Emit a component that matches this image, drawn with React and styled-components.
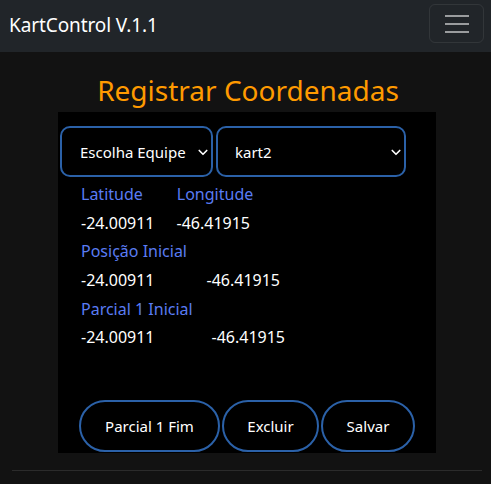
import React from "react";
import styled, { createGlobalStyle } from "styled-components";

const Global = createGlobalStyle`
  html, body { margin: 0; padding: 0; background: #121212; }
  body { font-family: "Noto Sans", "Open Sans", sans-serif; color: #fff; }
  * { box-sizing: border-box; }
`;

const Nav = styled.nav`
  height: 52px;
  background: #212529;
  display: flex;
  align-items: center;
  justify-content: space-between;
  padding: 0 7px 0 9px;
`;

const Brand = styled.div`
  font-size: 19px;
  color: #fff;
  letter-spacing: -0.1px;
  margin-top: -3px;
`;

const Toggler = styled.button`
  width: 55px;
  height: 39px;
  margin-top: -5px;
  background: transparent;
  border: 1px solid rgba(255, 255, 255, 0.08);
  border-radius: 6px;
  display: flex;
  flex-direction: column;
  align-items: center;
  justify-content: center;
  gap: 6px;
  padding: 0;
`;

const Bar = styled.span`
  display: block;
  width: 24px;
  height: 2px;
  background: #9a9c9e;
`;

const Main = styled.main`
  display: flex;
  flex-direction: column;
  align-items: flex-start;
  padding-left: 58px;
`;

const Title = styled.h1`
  width: 378px;
  margin: 0;
  height: 60px;
  display: flex;
  align-items: flex-end;
  justify-content: center;
  font-weight: 400;
  font-size: 28px;
  line-height: 34px;
  color: #ff9a00;
  padding: 0 0 5px 2px;
`;

const Panel = styled.section`
  width: 378px;
  height: 341px;
  background: #000;
  display: flex;
  flex-direction: column;
  padding: 14px 0 1px 2px;
`;

const SelectRow = styled.div`
  display: flex;
  gap: 3px;
`;

const Select = styled.div`
  width: ${(p) => p.$w}px;
  height: 51px;
  border: 2px solid #2b61a8;
  border-radius: 10px;
  display: flex;
  align-items: center;
  justify-content: space-between;
  padding: 0 2px 0 ${(p) => p.$pl}px;
  font-size: 15px;
  color: #fff;
`;

const Info = styled.div`
  display: flex;
  flex-direction: column;
  padding-left: 21px;
  margin-top: 3px;
`;

const Line = styled.div`
  display: flex;
  height: 28.6px;
  align-items: center;
  font-size: 16px;
  color: ${(p) => (p.$label ? "#5a7cf3" : "#fff")};
`;

const Second = styled.span`
  margin-left: ${(p) => p.$ml}px;
`;

const Buttons = styled.div`
  margin-top: auto;
  display: flex;
  gap: 2px;
  padding-left: 19px;
`;

const Pill = styled.button`
  width: ${(p) => p.$w}px;
  height: 52px;
  border: 2px solid #2b61a8;
  border-radius: 26px;
  background: #000;
  color: #fff;
  font-family: inherit;
  font-size: 15px;
  padding: 0;
`;

const Footer = styled.hr`
  margin: 17px 9px 0 12px;
  border: 0;
  border-top: 1px solid #2b2b2b;
`;

const Chevron = () => (
  <svg width="12" height="12" viewBox="0 0 16 16">
    <path d="M3 6l5 5 5-5" fill="none" stroke="#fff" strokeWidth="2.2" strokeLinecap="round" strokeLinejoin="round" />
  </svg>
);

export default function App() {
  return (
    <>
      <Global />
      <Nav>
        <Brand>KartControl V.1.1</Brand>
        <Toggler aria-label="menu">
          <Bar />
          <Bar />
          <Bar />
        </Toggler>
      </Nav>
      <Main>
        <Title>Registrar Coordenadas</Title>
        <Panel>
          <SelectRow>
            <Select $w={153} $pl={18}>
              Escolha Equipe <Chevron />
            </Select>
            <Select $w={190} $pl={17}>
              kart2 <Chevron />
            </Select>
          </SelectRow>
          <Info>
            <Line $label>
              Latitude<Second $ml={34}>Longitude</Second>
            </Line>
            <Line>
              -24.00911<Second $ml={22}>-46.41915</Second>
            </Line>
            <Line $label>Posição Inicial</Line>
            <Line>
              -24.00911<Second $ml={52}>-46.41915</Second>
            </Line>
            <Line $label>Parcial 1 Inicial</Line>
            <Line>
              -24.00911<Second $ml={57}>-46.41915</Second>
            </Line>
          </Info>
          <Buttons>
            <Pill $w={141}>Parcial 1 Fim</Pill>
            <Pill $w={97}>Excluir</Pill>
            <Pill $w={94}>Salvar</Pill>
          </Buttons>
        </Panel>
      </Main>
      <Footer />
    </>
  );
}
